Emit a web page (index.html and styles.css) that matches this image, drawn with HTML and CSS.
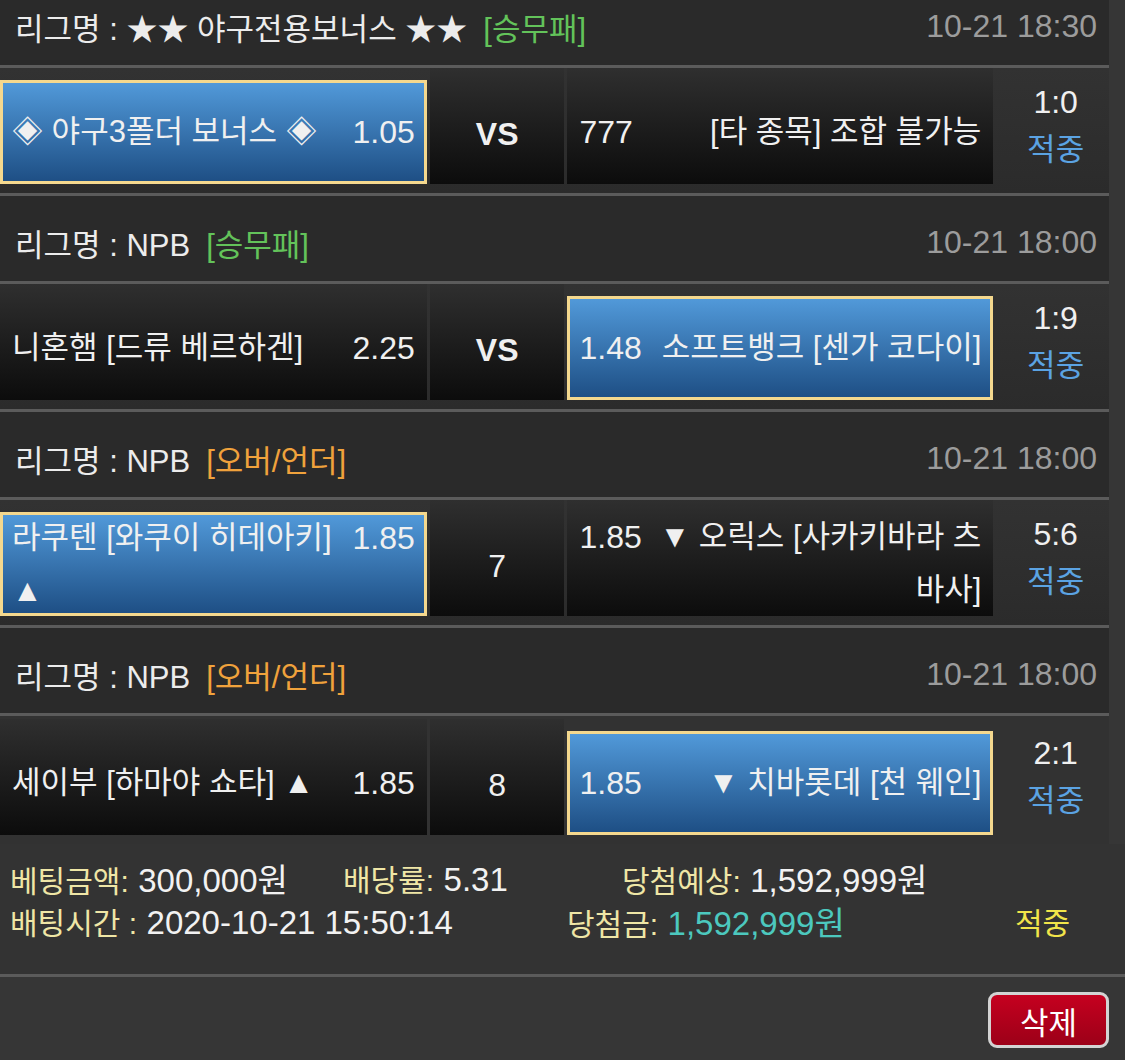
FILE: index.html
```html
<!DOCTYPE html>
<html lang="ko">
<head>
    <meta charset="UTF-8">
    <title>베팅내역</title>
    <link rel="stylesheet" href="styles.css">
</head>
<body>
    <div class="slip">
        <div class="games">
            <div class="league">
                <span class="league-name">리그명 : ★★ 야구전용보너스 ★★</span>
                <span class="type win">[승무패]</span>
                <span class="time">10-21 18:30</span>
            </div>
            <div class="match">
                <div class="cell team home picked">
                    <div class="txt"><span class="odds">1.05</span><span class="name">◈ 야구3폴더 보너스 ◈</span></div>
                </div>
                <div class="cell mid vs">VS</div>
                <div class="cell team away">
                    <div class="txt"><span class="odds">777</span><span class="name">[타 종목] 조합 불가능</span></div>
                </div>
                <div class="result"><div class="score">1:0</div><div class="hit">적중</div></div>
            </div>

            <div class="league">
                <span class="league-name">리그명 : NPB</span>
                <span class="type win">[승무패]</span>
                <span class="time">10-21 18:00</span>
            </div>
            <div class="match">
                <div class="cell team home">
                    <div class="txt"><span class="odds">2.25</span><span class="name">니혼햄 [드류 베르하겐]</span></div>
                </div>
                <div class="cell mid vs">VS</div>
                <div class="cell team away picked">
                    <div class="txt"><span class="odds">1.48</span><span class="name">소프트뱅크 [센가 코다이]</span></div>
                </div>
                <div class="result"><div class="score">1:9</div><div class="hit">적중</div></div>
            </div>

            <div class="league">
                <span class="league-name">리그명 : NPB</span>
                <span class="type ou">[오버/언더]</span>
                <span class="time">10-21 18:00</span>
            </div>
            <div class="match">
                <div class="cell team home picked">
                    <div class="txt"><span class="odds">1.85</span><span class="name">라쿠텐 [와쿠이 히데아키] ▲</span></div>
                </div>
                <div class="cell mid">7</div>
                <div class="cell team away">
                    <div class="txt"><span class="odds">1.85</span><span class="name">▼ 오릭스 [사카키바라 츠바사]</span></div>
                </div>
                <div class="result"><div class="score">5:6</div><div class="hit">적중</div></div>
            </div>

            <div class="league">
                <span class="league-name">리그명 : NPB</span>
                <span class="type ou">[오버/언더]</span>
                <span class="time">10-21 18:00</span>
            </div>
            <div class="match last">
                <div class="cell team home">
                    <div class="txt"><span class="odds">1.85</span><span class="name">세이부 [하마야 쇼타] ▲</span></div>
                </div>
                <div class="cell mid">8</div>
                <div class="cell team away picked">
                    <div class="txt"><span class="odds">1.85</span><span class="name">▼ 치바롯데 [천 웨인]</span></div>
                </div>
                <div class="result"><div class="score">2:1</div><div class="hit">적중</div></div>
            </div>
        </div>

        <div class="summary">
            <div class="sum-line">
                <div class="col c1"><span class="lbl">베팅금액:</span> <span class="val">300,000원</span></div>
                <div class="col c2"><span class="lbl">배당률:</span> <span class="val">5.31</span></div>
                <div class="col"><span class="lbl">당첨예상:</span> <span class="val">1,592,999원</span></div>
            </div>
            <div class="sum-line">
                <div class="col c3"><span class="lbl">배팅시간 :</span> <span class="val">2020-10-21 15:50:14</span></div>
                <div class="col c4"><span class="lbl">당첨금:</span> <span class="val win-amt">1,592,999원</span></div>
                <div class="col"><span class="status">적중</span></div>
            </div>
        </div>

        <div class="actions">
            <button class="btn-del">삭제</button>
        </div>
    </div>
</body>
</html>
```

FILE: styles.css
```css
body { margin: 0; background: #363636; color: #f0f0f0; font-family: "Liberation Sans", "Noto Sans CJK KR", sans-serif; }
.slip { width: 1125px; height: 1060px; overflow: hidden; }
.games { width: 1109px; margin-top: -20px; }

.league { height: 88px; box-sizing: border-box; display: flex; align-items: center; padding: 8px 12px 0 15px; background: #2a2a2a; border-bottom: 3px solid #5b5b5b; font-size: 31px; color: #ececec; }
.league .type { margin-left: 16px; }
.type.win { color: #63c35a; }
.type.ou { color: #f0a23c; }
.time { margin-left: auto; font-size: 32px; color: #9c9c9c; }

.match { height: 128px; box-sizing: border-box; display: flex; align-items: flex-end; gap: 3px; padding-bottom: 9px; background: linear-gradient(#323232, #2b2b2b); border-bottom: 3px solid #5b5b5b; }
.match.last { border-bottom: none; background: #323232; }

.cell { height: 116px; box-sizing: border-box; display: flex; align-items: center; padding-top: 16px; background: linear-gradient(#2f2f2f, #0c0c0c); }
.team { width: 428px; padding-left: 12px; padding-right: 12px; }
.team.away { width: 427px; }
.picked { height: 104px; padding: 5px 9px 0; border: 3px solid #f4d88e; background: linear-gradient(#5199d9, #1e4f85); }
.txt { width: 100%; line-height: 48px; }
.odds { font-size: 32px; }
.name { font-size: 31px; }
.home .odds { float: right; margin-left: 8px; }
.away .txt { text-align: right; }
.away .odds { float: left; margin-right: 8px; }
.mid { width: 135px; justify-content: center; font-size: 32px; }
.vs { font-weight: bold; }

.result { width: 113px; height: 116px; box-sizing: border-box; padding-left: 6px; display: flex; flex-direction: column; justify-content: center; align-items: center; line-height: 48px; }
.score { font-size: 32px; }
.hit { font-size: 31px; color: #5ba3e3; }

.summary { height: 133px; box-sizing: border-box; padding: 12px 0 0 10px; background: #333; border-bottom: 3px solid #5b5b5b; }
.sum-line { display: flex; height: 43px; align-items: center; }
.c1 { width: 333px; }
.c2 { width: 279px; }
.c3 { width: 557px; }
.c4 { width: 448px; }
.lbl { font-size: 30px; color: #efe6a6; }
.val { margin-left: 5px; font-size: 33px; color: #f2f2f2; }
.val.win-amt { color: #4cc8be; }
.status { font-size: 30px; color: #f2e54a; }

.actions { display: flex; justify-content: flex-end; padding: 15px 16px 0 0; }
.btn-del { width: 121px; height: 56px; border: 3px solid #d3d3d3; border-radius: 9px; background: linear-gradient(#c5001f, #9c0018); color: #fff; font-family: inherit; font-size: 31px; cursor: pointer; }
```
